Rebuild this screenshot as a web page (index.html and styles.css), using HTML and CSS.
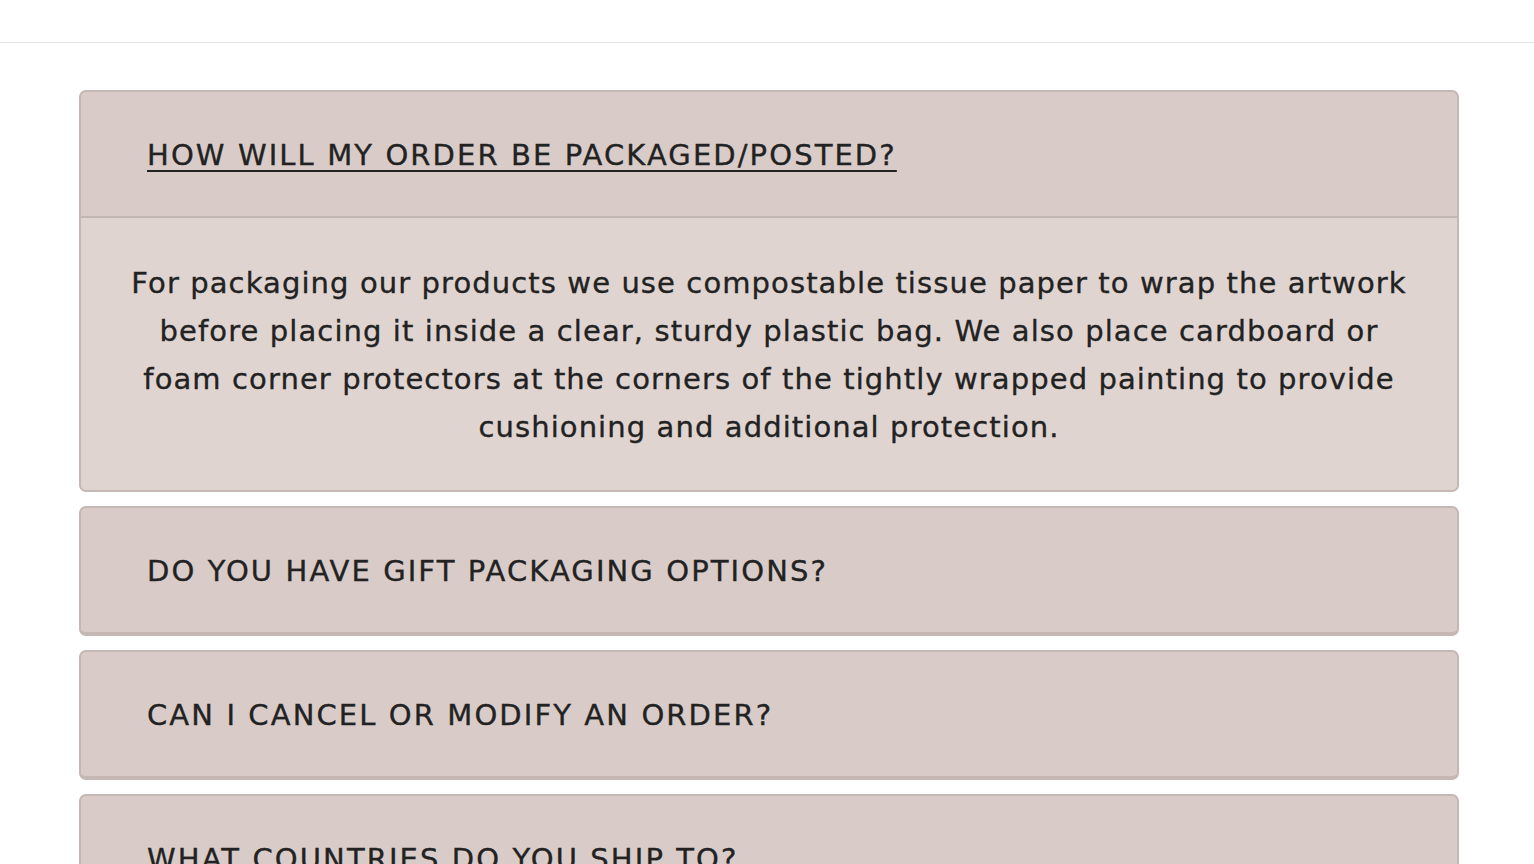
FILE: index.html
```html
<!DOCTYPE html>
<html lang="en">
<head>
<meta charset="utf-8">
<title>FAQ</title>
<link rel="stylesheet" href="styles.css">
</head>
<body>
<header class="topbar"></header>
<main class="faq">
  <section class="item open">
    <h2 class="q"><a href="#">HOW WILL MY ORDER BE PACKAGED/POSTED?</a></h2>
    <div class="a">
      <p>For packaging our products we use compostable tissue paper to wrap the artwork before placing it inside a clear, sturdy plastic bag. We also place cardboard or foam corner protectors at the corners of the tightly wrapped painting to provide cushioning and additional protection.</p>
    </div>
  </section>
  <section class="item">
    <h2 class="q">DO YOU HAVE GIFT PACKAGING OPTIONS?</h2>
  </section>
  <section class="item">
    <h2 class="q">CAN I CANCEL OR MODIFY AN ORDER?</h2>
  </section>
  <section class="item">
    <h2 class="q">WHAT COUNTRIES DO YOU SHIP TO?</h2>
  </section>
</main>
</body>
</html>
```
FILE: styles.css
```css
html, body {
  margin: 0;
  padding: 0;
  background: #fff;
  overflow: hidden;
}
body {
  font-family: "DejaVu Sans", "Liberation Sans", sans-serif;
  color: #222;
  -webkit-text-stroke: 0.35px currentColor;
}
.topbar {
  height: 42px;
  border-bottom: 1px solid #e4e4e4;
}
.faq {
  display: flex;
  flex-direction: column;
  gap: 14px;
  padding: 47px 75px 0 79px;
}
.item {
  background: #d9ccc8;
  border: 2px solid #c5b8b4;
  border-bottom-width: 4px;
  border-radius: 7px;
  overflow: hidden;
}
.item.open {
  border-bottom-width: 2px;
}
.q {
  margin: 0;
  height: 124px;
  display: flex;
  align-items: center;
  padding: 2px 0 0 66px;
  box-sizing: border-box;
  font-size: 29px;
  font-weight: normal;
  letter-spacing: 2.1px;
}
.q a {
  color: inherit;
  text-decoration: underline;
  text-decoration-thickness: 2px;
  text-underline-offset: 5px;
}
.open .q {
  height: 126px;
  border-bottom: 2px solid #c4b7b3;
}
.a {
  background: #e0d4d0;
  padding: 41px 40px 39px;
}
.a p {
  margin: 0;
  text-align: center;
  font-size: 29px;
  line-height: 48px;
  font-weight: normal;
  letter-spacing: 1.1px;
}
```
